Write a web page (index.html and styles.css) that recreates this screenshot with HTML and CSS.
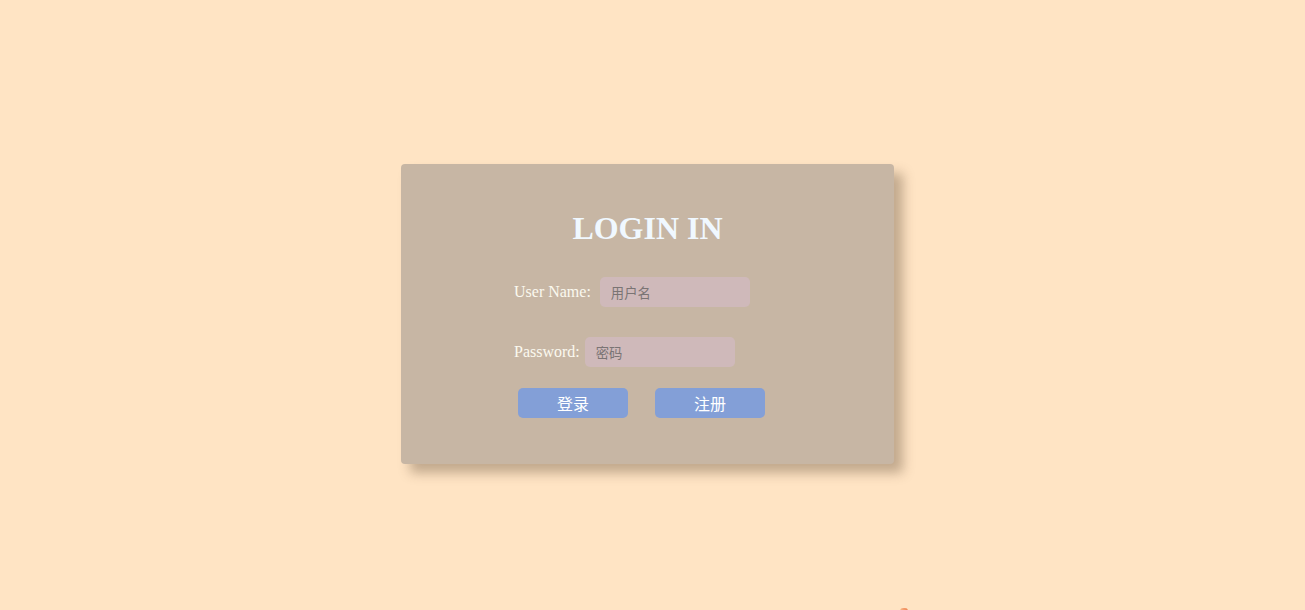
FILE: index.html
```html
<!DOCTYPE html>
<html lang="zh">
<head>
<meta charset="utf-8">
<title>Login</title>
<link rel="stylesheet" href="styles.css">
</head>
<body>
<div class="page">
  <div class="card">
    <h1 class="title">LOGIN IN</h1>
    <form class="form">
      <div class="row">
        <label class="label label-user" for="user">User Name:</label>
        <input class="field" id="user" type="text" placeholder="用户名">
      </div>
      <div class="row">
        <label class="label label-pass" for="pass">Password:</label>
        <input class="field" id="pass" type="password" placeholder="密码">
      </div>
      <div class="actions">
        <button class="btn" type="button">登录</button>
        <button class="btn" type="button">注册</button>
      </div>
    </form>
  </div>
</div>
<div class="peek"></div>
</body>
</html>
```

FILE: styles.css
```css
html, body {
  margin: 0;
  padding: 0;
  background: #ffe4c4;
  height: 100%;
  overflow: hidden;
}

.page {
  display: flex;
  justify-content: center;
  padding: 164px 10px 0 0;
}

.card {
  width: 493px;
  height: 300px;
  box-sizing: border-box;
  background: #c7b6a4;
  border-radius: 4px;
  box-shadow: 9px 9px 12px rgba(80, 60, 40, 0.35);
  padding-top: 46px;
  font-family: "Liberation Serif", "Times New Roman", serif;
}

.title {
  margin: 0;
  text-align: center;
  font-size: 32px;
  font-weight: bold;
  line-height: 36px;
  color: #f0f8ff;
}

.form {
  margin: 31px 0 0 113px;
  display: flex;
  flex-direction: column;
  gap: 30px;
}

.row {
  display: flex;
  align-items: center;
  height: 30px;
}

.label {
  font-size: 16px;
  color: #fbf9ef;
}

.label-user { margin-right: 9px; }
.label-pass { margin-right: 5px; }

.field {
  width: 150px;
  height: 30px;
  box-sizing: border-box;
  border: none;
  outline: none;
  border-radius: 5px;
  background: #cfb9ba;
  padding: 0 10px 0 11px;
  font-family: "Noto Sans CJK SC", "Noto Sans", sans-serif;
  font-size: 13.33px;
  color: #555;
}

.field::placeholder {
  color: #7a7474;
}

.actions {
  display: flex;
  gap: 27px;
  margin: -9px 0 0 4px;
}

.btn {
  width: 110px;
  height: 30px;
  border: none;
  border-radius: 5px;
  background: #839fd7;
  color: #ffffff;
  font-family: "Noto Sans CJK SC", "Noto Sans", sans-serif;
  font-size: 16px;
  padding: 0;
  cursor: pointer;
}

.peek {
  width: 8px;
  height: 3px;
  margin: 144px 0 0 900px;
  border-radius: 4px 4px 0 0;
  background: linear-gradient(90deg, #f7b98a, #f08050);
}
```
